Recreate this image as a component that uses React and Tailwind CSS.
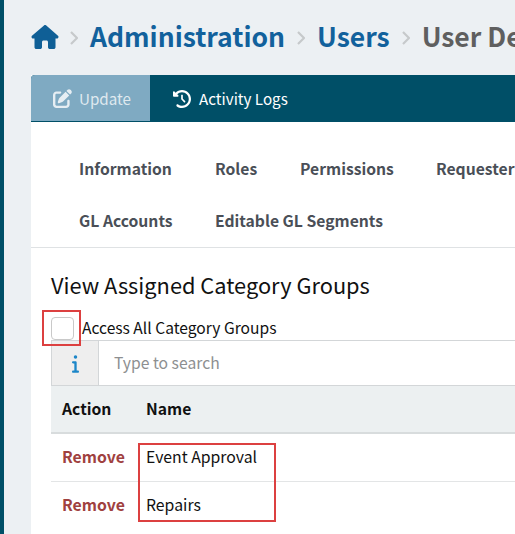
function Sep() {
  return (
    <svg viewBox="0 0 8 14" className="w-[8px] h-[14px] mx-[12px] shrink-0 mt-[1px]" fill="none" stroke="#c6c9cb" strokeWidth="2.2">
      <path d="M1 1l6 6-6 6" />
    </svg>
  );
}

export default function App() {
  return (
    <div className="relative w-[515px] h-[534px] overflow-hidden bg-[#ecf0f3] border-l-[4px] border-[#004f67] font-['Noto_Sans_CJK_SC','Noto_Sans',sans-serif] text-black">
      <div className="flex items-center h-[75px] pl-[27px] pb-[1px] whitespace-nowrap text-[26.5px] font-bold leading-[36px]">
        <svg viewBox="0 0 576 512" className="w-[28px] h-[24px] fill-[#0f5f96] shrink-0 -mr-[1px]">
          <path d="M575.8 255.5c0 18-15 32.1-32 32.1h-32l.7 160.2c0 2.7-.2 5.4-.5 8.1V472c0 22.1-17.9 40-40 40H456c-1.1 0-2.2 0-3.3-.1-1.4.1-2.8.1-4.2.1H392c-22.1 0-40-17.9-40-40V360c0-17.7-14.3-32-32-32h-64c-17.7 0-32 14.3-32 32v112c0 22.1-17.9 40-40 40h-55.9c-1.5 0-3-.1-4.5-.2-1.2.1-2.4.2-3.6.2H104c-22.1 0-40-17.9-40-40V360c0-.9 0-1.9.1-2.8v-69.7H32c-18 0-32-14-32-32.1 0-9 3-17 10-24L266.4 8c7-7 15-8 22-8s15 2 21 7l255.4 224.5c8 7 12 15 11 24z" />
        </svg>
        <Sep />
        <span className="text-[#12619c] -mt-[3px]">Administration</span>
        <Sep />
        <span className="text-[#12619c] -mt-[3px]">Users</span>
        <Sep />
        <span className="text-[#5f5f5f] -mt-[3px]">User Details</span>
      </div>

      <div className="ml-[27px] w-[520px] h-[459px] bg-white">
        <div className="flex h-[47px] bg-[#004f67] rounded-t-[4px] overflow-hidden text-[15.2px] text-white">
          <div className="flex items-center w-[119px] pl-[22px] bg-[#7faac2] border-b-[1px] border-[#004f67]">
            <svg viewBox="0 0 512 512" className="w-[19px] h-[19px] fill-[#e6eef3] mr-[7px] shrink-0">
              <path d="M471.6 21.7c-21.9-21.9-57.3-21.9-79.2 0L362.3 51.7l97.9 97.9 30.1-30.1c21.9-21.9 21.9-57.3 0-79.2L471.6 21.7zM172.4 241.7c-6.1 6.1-10.8 13.6-13.5 21.9l-29.6 88.8c-2.9 8.6-.6 18.1 5.8 24.6s15.9 8.7 24.6 5.8l88.8-29.6c8.2-2.7 15.7-7.4 21.9-13.5L437.7 172.3 339.7 74.3 172.4 241.7zM96 64C43 64 0 107 0 160V416c0 53 43 96 96 96H352c53 0 96-43 96-96V320c0-17.7-14.3-32-32-32s-32 14.3-32 32v96c0 17.7-14.3 32-32 32H96c-17.7 0-32-14.3-32-32V160c0-17.7 14.3-32 32-32h96c17.7 0 32-14.3 32-32s-14.3-32-32-32H96z" />
            </svg>
            <span className="text-[#dfe9ef]">Update</span>
          </div>
          <div className="flex items-center pl-[23px]">
            <svg viewBox="0 0 512 512" className="w-[18px] h-[18px] fill-white mr-[8px] shrink-0">
              <path d="M75 75L41 41C25.9 25.9 0 36.6 0 57.9V168c0 13.3 10.7 24 24 24H134.1c21.4 0 32.1-25.9 17-41l-30.8-30.8C155 85.5 203 64 256 64c106 0 192 86 192 192s-86 192-192 192c-40.8 0-78.6-12.7-109.7-34.4-14.5-10.1-34.4-6.6-44.6 7.9s-6.6 34.4 7.9 44.6C151.2 495 201.7 512 256 512c141.4 0 256-114.6 256-256S397.4 0 256 0C185.3 0 121.3 28.7 75 75zm181 53c-13.3 0-24 10.7-24 24V256c0 6.4 2.5 12.5 7 17l72 72c9.4 9.4 24.6 9.4 33.9 0s9.4-24.6 0-33.9l-65-65V152c0-13.3-10.7-24-24-24z" />
            </svg>
            <span>Activity Logs</span>
          </div>
        </div>

        <div className="h-[126px] border-b border-[#dfe2e4] pl-[48px] pt-[21px] text-[15.7px] font-bold leading-[52px] text-[#4a4f57]">
          <div className="flex h-[52px] whitespace-nowrap">
            <span className="w-[136px]">Information</span>
            <span className="w-[85px]">Roles</span>
            <span className="w-[136px]">Permissions</span>
            <span>Requester</span>
          </div>
          <div className="flex h-[52px] whitespace-nowrap">
            <span className="w-[136px]">GL Accounts</span>
            <span>Editable GL Segments</span>
          </div>
        </div>

        <div className="pl-[20px]">
          <h2 className="pt-[19px] text-[21.8px] leading-[36px] font-normal text-[#111]">View Assigned Category Groups</h2>
          <div className="flex items-center h-[30px] mt-[10px] text-[15.6px]">
            <div className="w-[23px] h-[23px] border border-[#c9c9c9] rounded-[4px] bg-white shrink-0"></div>
            <span className="ml-[8px] leading-[24px] text-[#111] -mt-[2px]">Access All Category Groups</span>
          </div>

          <div className="flex h-[46px] border border-[#d3d6d8] -mt-[3px]">
            <div className="flex items-center justify-center w-[47px] bg-[#eeeeee] border-r border-[#d3d6d8] shrink-0">
              <svg viewBox="0 0 192 512" className="w-[7px] h-[19px] fill-[#1c86c8]">
                <path d="M48 80a48 48 0 1 1 96 0A48 48 0 1 1 48 80zM0 224c0-17.7 14.3-32 32-32H96c17.7 0 32 14.3 32 32V448h32c17.7 0 32 14.3 32 32s-14.3 32-32 32H32c-17.7 0-32-14.3-32-32s14.3-32 32-32H64V256H32c-17.7 0-32-14.3-32-32z" />
              </svg>
            </div>
            <div className="flex items-center pl-[15px] text-[#8d8f91] text-[15.7px]">Type to search</div>
          </div>

          <div className="flex h-[48px] items-center pb-[1px] bg-[#ecf0f1] border-b-[2px] border-[#d8dcdd] text-[15.7px] font-bold text-[#111]">
            <span className="w-[95px] pl-[11px]">Action</span>
            <span>Name</span>
          </div>
          <div className="flex h-[48px] pt-[11px] border-b border-[#e3e5e6] text-[15.8px] leading-[24px]">
            <span className="w-[95px] pl-[11px] font-bold text-[#a0413f]">Remove</span>
            <span className="text-[#111]">Event Approval</span>
          </div>
          <div className="flex h-[48px] pt-[11px] text-[15.8px] leading-[24px]">
            <span className="w-[95px] pl-[11px] font-bold text-[#a0413f]">Remove</span>
            <span className="text-[#111]">Repairs</span>
          </div>
        </div>
      </div>

      <div className="absolute left-[38px] top-[310px] w-[39px] h-[36px] border-[2px] border-[#dc4040]"></div>
      <div className="absolute left-[134px] top-[443px] w-[138px] h-[79px] border-[2px] border-[#dc4040]"></div>
    </div>
  );
}
